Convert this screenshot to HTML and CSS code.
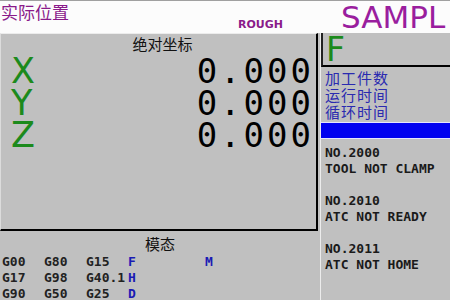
FILE: index.html
```html
<!DOCTYPE html>
<html>
<head>
  <meta charset="utf-8">
  <title>实际位置</title>
  <link rel="stylesheet" href="styles.css">
</head>
<body>

<!-- 顶部标题栏 -->
<div class="top">
  <span class="title">实际位置</span>
  <span class="mode">ROUGH</span>
  <span class="prog">SAMPL</span>
</div>

<div class="main">
  <!-- 左侧：坐标 + 模态 -->
  <div class="left">
    <div class="coord">
      <div class="coord-title">绝对坐标</div>
      <div class="axis"><span class="name">X</span><span class="val">0.000</span></div>
      <div class="axis"><span class="name">Y</span><span class="val">0.000</span></div>
      <div class="axis"><span class="name">Z</span><span class="val">0.000</span></div>
    </div>

    <div class="modal">
      <div class="modal-title">模态</div>
      <div class="grow"><span>G00</span><span>G80</span><span>G15</span><span class="b">F</span><span class="b m">M</span></div>
      <div class="grow"><span>G17</span><span>G98</span><span>G40.1</span><span class="b">H</span></div>
      <div class="grow"><span>G90</span><span>G50</span><span>G25</span><span class="b">D</span></div>
    </div>
  </div>

  <!-- 右侧：进给 + 计数 + 报警 -->
  <div class="right">
    <div class="fbox">F</div>
    <div class="labels">
      <div>加工件数</div>
      <div>运行时间</div>
      <div>循环时间</div>
    </div>
    <div class="bar"></div>
    <div class="alarms">
      NO.2000<br>
      TOOL NOT CLAMP<br>
      <br>
      NO.2010<br>
      ATC NOT READY<br>
      <br>
      NO.2011<br>
      ATC NOT HOME
    </div>
  </div>
</div>

</body>
</html>
```

FILE: styles.css
```css
/* 整体 */
body {
  margin: 0;
  width: 450px;
  height: 300px;
  overflow: hidden;
  background: #c0c0c0;
  font-family: "DejaVu Sans Mono", "Liberation Mono", monospace;
}

/* 顶部标题栏 */
.top {
  height: 32px;
  background: #fcfcfc;
  border-top: 1px solid #a0a0a0;
  display: flex;
  align-items: flex-start;
  white-space: nowrap;
}

.title {
  font-family: "Noto Sans CJK SC", sans-serif;
  font-size: 17px;
  line-height: 20px;
  color: #8a1a8a;
  margin-left: 1px;
  margin-top: 1px;
}

.mode {
  font-family: "DejaVu Sans", sans-serif;
  font-weight: bold;
  font-size: 11px;
  color: #8a1a8a;
  margin-left: 169px;
  margin-top: 17px;
}

.prog {
  font-family: "DejaVu Sans", sans-serif;
  font-size: 31px;
  line-height: 30px;
  color: #9a1e9e;
  margin-left: 58px;
  margin-top: 1px;
}

.main {
  display: grid;
  grid-template-columns: 320px 130px;
  height: 267px;
}

/* 坐标区 */
.coord {
  height: 195px;
  border-top: 1px solid #ececec;
  border-left: 1px solid #dcdcdc;
  border-right: 2px solid #000;
  border-bottom: 2px solid #000;
  width: 315px;
}

.coord-title {
  font-family: "Noto Sans CJK SC", sans-serif;
  font-size: 15px;
  line-height: 20px;
  text-align: center;
  color: #111;
  padding-left: 8px;
}

.axis {
  display: flex;
  justify-content: space-between;
  align-items: center;
  height: 32px;
}

.coord-title + .axis {
  margin-top: 1px;
}

.name {
  font-family: "DejaVu Sans", sans-serif;
  font-size: 35px;
  color: #1c8a1c;
  margin-left: 10px;
  line-height: 32px;
}

.val {
  font-size: 34px;
  letter-spacing: 3px;
  color: #000;
  line-height: 32px;
  margin-right: 2px;
}

/* 模态 */
.modal-title {
  font-family: "Noto Sans CJK SC", sans-serif;
  font-size: 15px;
  line-height: 20px;
  text-align: center;
  color: #111;
  margin-top: 3px;
}

.grow {
  font-weight: bold;
  font-size: 13px;
  line-height: 16px;
  color: #222;
  display: flex;
  padding-left: 2px;
}

.grow span {
  width: 42px;
}

.grow .b {
  color: #1a1ab4;
}

.grow .m {
  margin-left: 35px;
}

/* 右侧 */
.right {
  border-left: 1px solid #ececec;
}

.fbox {
  height: 32px;
  border-left: 2px solid #222;
  border-bottom: 2px solid #000;
  font-family: "DejaVu Sans", sans-serif;
  font-size: 33px;
  line-height: 34px;
  color: #1c8a1c;
  padding-left: 3px;
}

.labels {
  font-family: "Noto Sans CJK SC", sans-serif;
  font-size: 15px;
  letter-spacing: 1px;
  color: #2a2ab0;
  padding-left: 4px;
  padding-top: 2px;
  height: 53px;
}

.labels div {
  height: 17px;
  line-height: 17px;
}

.bar {
  height: 15px;
  background: #0000f0;
  border-top: 1px solid #e4e4ff;
  border-bottom: 1px solid #e4e4ff;
}

.alarms {
  font-weight: bold;
  font-size: 13px;
  line-height: 16px;
  color: #1a1a1a;
  padding-left: 4px;
  padding-top: 6px;
  white-space: nowrap;
}
```
